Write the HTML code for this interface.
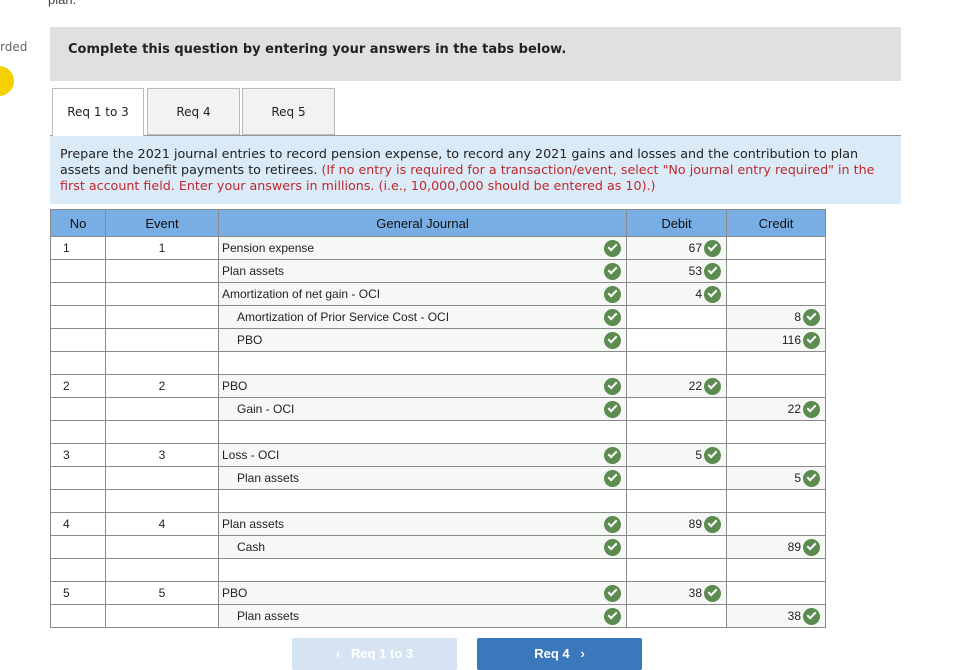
<!DOCTYPE html>
<html><head><style>
body{margin:0;width:960px;height:668px;overflow:hidden;background:#fff;font-family:"Liberation Sans",sans-serif;position:relative}
.v{font-family:"DejaVu Sans",sans-serif}
.a{position:absolute}
table{position:absolute;left:50px;top:209px;border-collapse:collapse;font-size:12px;color:#222;table-layout:fixed}
td,th{border:1px solid #8a8a8a;height:23px;padding:0;box-sizing:border-box}
th{background:#78aee3;font-weight:normal;font-size:13px;color:#111;height:27px}
td.n{padding-left:12px}td.e{text-align:center}
td.g{background:#f6f8f6;padding-left:3px;position:relative}
td.g.i{padding-left:18px}
td.d{text-align:right;padding-right:24px;position:relative}
td.f{background:#f6f8f6}
.ck{position:absolute;width:17px;height:17px;border-radius:50%;background:#5b8b4e;top:3px}
.ck:after{content:"";position:absolute;left:4px;top:4px;width:7px;height:3px;border-left:2px solid #fff;border-bottom:2px solid #fff;transform:rotate(-45deg)}
td.g .ck{right:5px}td.d .ck{right:5px}
</style></head><body>
<div class="a" style="top:-8px;font-size:13px;color:#444;left:48px">plan.</div>
<div class="a v" style="left:0;top:40px;font-size:12px;color:#666">rded</div>
<div class="a" style="left:-16px;top:66px;width:30px;height:30px;border-radius:50%;background:#f5d000"></div>
<div class="a" style="left:50px;top:27px;width:851px;height:54px;background:#e0e0e0"></div>
<div class="a v" style="left:68px;top:42px;font-size:13px;font-weight:bold;color:#222">Complete this question by entering your answers in the tabs below.</div>
<div class="a" style="left:50px;top:135px;width:851px;height:1px;background:#999"></div>
<div class="a v" style="left:52px;top:88px;width:92px;height:48px;background:#fff;border:1px solid #bbb;border-bottom:none;box-sizing:border-box;text-align:center;line-height:46px;font-size:12px;color:#222">Req 1 to 3</div>
<div class="a v" style="left:147px;top:88px;width:93px;height:47px;background:#f2f2f2;border:1px solid #bbb;box-sizing:border-box;text-align:center;line-height:46px;font-size:12px;color:#222">Req 4</div>
<div class="a v" style="left:242px;top:88px;width:93px;height:47px;background:#f2f2f2;border:1px solid #bbb;box-sizing:border-box;text-align:center;line-height:46px;font-size:12px;color:#222">Req 5</div>
<div class="a" style="left:50px;top:136px;width:851px;height:68px;background:#dbeaf7"></div>
<div class="a v" style="left:60px;top:146px;width:830px;font-size:12.7px;line-height:16px;color:#222">Prepare the 2021 journal entries to record pension expense, to record any 2021 gains and losses and the contribution to plan assets and benefit payments to retirees. <span style="color:#c0282d">(If no entry is required for a transaction/event, select "No journal entry required" in the first account field. Enter your answers in millions. (i.e., 10,000,000 should be entered as 10).)</span></div>
<table>
<colgroup><col style="width:55px"><col style="width:113px"><col style="width:408px"><col style="width:100px"><col style="width:99px"></colgroup>
<tr><th>No</th><th>Event</th><th>General Journal</th><th>Debit</th><th>Credit</th></tr>
<tr><td class="n">1</td><td class="e">1</td><td class="g">Pension expense<span class="ck"></span></td><td class="d f">67<span class="ck"></span></td><td></td></tr>
<tr><td></td><td></td><td class="g">Plan assets<span class="ck"></span></td><td class="d f">53<span class="ck"></span></td><td></td></tr>
<tr><td></td><td></td><td class="g">Amortization of net gain - OCI<span class="ck"></span></td><td class="d f">4<span class="ck"></span></td><td></td></tr>
<tr><td></td><td></td><td class="g i">Amortization of Prior Service Cost - OCI<span class="ck"></span></td><td></td><td class="d f">8<span class="ck"></span></td></tr>
<tr><td></td><td></td><td class="g i">PBO<span class="ck"></span></td><td></td><td class="d f">116<span class="ck"></span></td></tr>
<tr><td></td><td></td><td></td><td></td><td></td></tr>
<tr><td class="n">2</td><td class="e">2</td><td class="g">PBO<span class="ck"></span></td><td class="d f">22<span class="ck"></span></td><td></td></tr>
<tr><td></td><td></td><td class="g i">Gain - OCI<span class="ck"></span></td><td></td><td class="d f">22<span class="ck"></span></td></tr>
<tr><td></td><td></td><td></td><td></td><td></td></tr>
<tr><td class="n">3</td><td class="e">3</td><td class="g">Loss - OCI<span class="ck"></span></td><td class="d f">5<span class="ck"></span></td><td></td></tr>
<tr><td></td><td></td><td class="g i">Plan assets<span class="ck"></span></td><td></td><td class="d f">5<span class="ck"></span></td></tr>
<tr><td></td><td></td><td></td><td></td><td></td></tr>
<tr><td class="n">4</td><td class="e">4</td><td class="g">Plan assets<span class="ck"></span></td><td class="d f">89<span class="ck"></span></td><td></td></tr>
<tr><td></td><td></td><td class="g i">Cash<span class="ck"></span></td><td></td><td class="d f">89<span class="ck"></span></td></tr>
<tr><td></td><td></td><td></td><td></td><td></td></tr>
<tr><td class="n">5</td><td class="e">5</td><td class="g">PBO<span class="ck"></span></td><td class="d f">38<span class="ck"></span></td><td></td></tr>
<tr><td></td><td></td><td class="g i">Plan assets<span class="ck"></span></td><td></td><td class="d f">38<span class="ck"></span></td></tr>
</table>
<div class="a" style="left:292px;top:638px;width:165px;height:32px;background:#d6e3f2;border-radius:2px;color:#fff;font-weight:bold;font-size:13px;text-align:center;line-height:32px">&lsaquo;&nbsp;&nbsp; Req 1 to 3</div>
<div class="a" style="left:477px;top:638px;width:165px;height:32px;background:#3a77bb;border-radius:2px;color:#fff;font-weight:bold;font-size:13px;text-align:center;line-height:32px">Req 4 &nbsp;&nbsp;&rsaquo;</div>
</body></html>
